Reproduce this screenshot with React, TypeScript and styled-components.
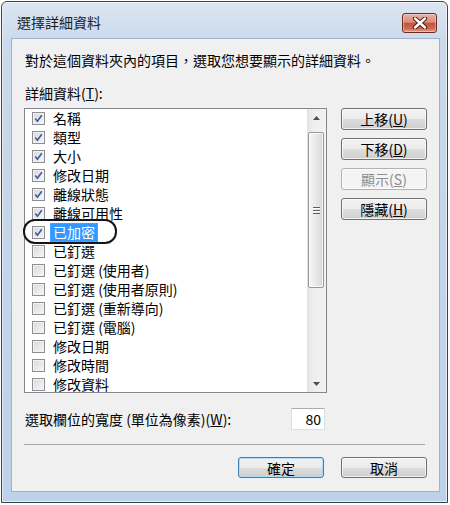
import styled, { createGlobalStyle } from 'styled-components';

const GlobalStyle = createGlobalStyle`
  html, body {
    margin: 0;
    padding: 0;
    background: #ffffff;
  }
  body {
    font-family: "Noto Sans CJK TC", "Noto Sans", "Liberation Sans", sans-serif;
  }
`;

const Window = styled.div`
  margin: 1px 0 0 1px;
  width: 447px;
  height: 502px;
  box-sizing: border-box;
  border: 1px solid #3c4149;
  border-radius: 6px 6px 0 0;
  background: linear-gradient(180deg, #dce6f2 0px, #cad9eb 40px, #bcd1ea 100%);
  box-shadow: inset 0 0 0 1px rgba(255, 255, 255, 0.6);
  display: flex;
  flex-direction: column;
`;

const TitleBar = styled.div`
  height: 36px;
  display: flex;
  align-items: flex-start;
  padding: 0 10px 0 15px;
`;

const Title = styled.span`
  flex: 1;
  margin-top: 11px;
  font-size: 14px;
  line-height: 18px;
  color: #1b1b1b;
`;

const CloseButton = styled.div`
  margin-top: 11px;
  width: 35px;
  height: 20px;
  box-sizing: border-box;
  border: 1px solid #6a2b22;
  border-radius: 3px;
  background: linear-gradient(
    180deg,
    #eab0a3 0%,
    #da8e7d 45%,
    #c4533d 52%,
    #cc6a52 80%,
    #e3a088 100%
  );
  box-shadow: inset 0 0 0 1px rgba(255, 255, 255, 0.35);
  display: flex;
  align-items: center;
  justify-content: center;
`;

const Client = styled.div`
  flex: 1;
  margin: 0 7px 10px 9px;
  border: 1px solid #9fb2c8;
  background: #f0f0f0;
  padding: 12px 12px 0 12px;
  display: flex;
  flex-direction: column;
  color: #000;
  font-size: 14px;
  line-height: 18px;
`;

const Intro = styled.div`
  padding-left: 1px;
`;

const SectionLabel = styled.div`
  margin-top: 15px;
  padding-left: 1px;
`;

const MainRow = styled.div`
  margin-top: 6px;
  display: flex;
  align-items: flex-start;
`;

const ListBox = styled.div`
  width: 303px;
  height: 285px;
  box-sizing: border-box;
  border: 1px solid #828790;
  background: #ffffff;
  display: flex;
`;

const Items = styled.div`
  flex: 1;
  display: flex;
  flex-direction: column;
`;

const Row = styled.div`
  position: relative;
  height: 19px;
  display: flex;
  align-items: center;
  padding-left: 7px;
`;

const CheckBox = styled.span`
  width: 13px;
  height: 13px;
  box-sizing: border-box;
  border: 1px solid #8f8f8f;
  background: linear-gradient(135deg, #d6d8dc, #f7f7f7);
  box-shadow: inset 0 0 0 1px #f2f2f2;
  display: flex;
  align-items: center;
  justify-content: center;
  flex-shrink: 0;
`;

const ItemLabel = styled.span<{ $selected?: boolean }>`
  margin-left: 5px;
  padding: 0 2px;
  height: 19px;
  box-sizing: border-box;
  line-height: 17px;
  border: 1px dotted ${(p) => (p.$selected ? '#e6883c' : 'transparent')};
  background: ${(p) => (p.$selected ? '#3399ff' : 'transparent')};
  color: ${(p) => (p.$selected ? '#ffffff' : '#000000')};
  white-space: nowrap;
`;

const Annotation = styled.div`
  position: absolute;
  left: -2px;
  top: -4px;
  width: 94px;
  height: 25px;
  box-sizing: border-box;
  border: 2px solid #151515;
  border-radius: 12px;
  pointer-events: none;
`;

const ScrollBar = styled.div`
  width: 19px;
  background: linear-gradient(90deg, #e2e2e2 0%, #efefef 35%, #f2f2f2 100%);
  display: flex;
  flex-direction: column;
`;

const ArrowButton = styled.div`
  height: 17px;
  display: flex;
  align-items: center;
  justify-content: center;
`;

const Track = styled.div`
  flex: 1;
  padding-top: 6px;
`;

const Thumb = styled.div`
  height: 156px;
  margin: 0 2px 0 1px;
  box-sizing: border-box;
  border: 1px solid #979797;
  border-radius: 2px;
  background: linear-gradient(90deg, #f6f6f6 0%, #e9e9e9 50%, #d6d6d6 100%);
  box-shadow: inset 0 0 0 1px rgba(255, 255, 255, 0.8);
  display: flex;
  align-items: center;
  justify-content: center;
`;

const Gripper = styled.div`
  width: 7px;
  height: 7px;
  background: repeating-linear-gradient(
    180deg,
    #5e5e5e 0px,
    #5e5e5e 1px,
    #ffffff 1px,
    #ffffff 2px,
    transparent 2px,
    transparent 3px
  );
`;

const ButtonColumn = styled.div`
  margin-left: 14px;
  display: flex;
  flex-direction: column;
  gap: 8px;
`;

const Button = styled.div<{ $disabled?: boolean; $default?: boolean; $short?: boolean }>`
  width: 86px;
  height: ${(p) => (p.$short ? '21px' : '22px')};
  box-sizing: border-box;
  border: 1px solid
    ${(p) => (p.$disabled ? '#adb2b5' : p.$default ? '#3c7fb1' : '#707070')};
  border-radius: 3px;
  background: ${(p) =>
    p.$disabled
      ? '#f4f4f4'
      : 'linear-gradient(180deg, #f2f2f2 0%, #ebebeb 50%, #dddddd 51%, #cfcfcf 100%)'};
  box-shadow: inset 0 0 0 1px
    ${(p) => (p.$default ? 'rgba(170, 220, 250, 0.9)' : 'rgba(255, 255, 255, 0.7)')};
  color: ${(p) => (p.$disabled ? '#8d8d8d' : '#000000')};
  display: flex;
  align-items: center;
  justify-content: center;
  font-size: 14px;
  line-height: 18px;
`;

const WidthRow = styled.div`
  margin-top: 15px;
  width: 301px;
  height: 22px;
  display: flex;
  align-items: center;
`;

const WidthLabel = styled.span`
  padding-left: 1px;
`;

const WidthInput = styled.input`
  margin-left: auto;
  width: 34px;
  height: 22px;
  box-sizing: border-box;
  border: 1px solid #dbdfe6;
  border-top-color: #abadb3;
  background: #ffffff;
  padding: 0 3px 0 0;
  font-family: inherit;
  font-size: 14px;
  text-align: right;
  color: #000;
  outline: none;
`;

const Separator = styled.div`
  margin-top: 14px;
  width: 401px;
  border-top: 1px solid #a7a7a7;
`;

const ButtonRow = styled.div`
  margin-top: 12px;
  display: flex;
  justify-content: flex-end;
  gap: 17px;
`;

const CheckMark = () => (
  <svg width="9" height="9" viewBox="0 0 9 9">
    <path d="M1.3 4.6 L3.4 7.2 L7.8 1.2" fill="none" stroke="#3a58a3" strokeWidth="1.6" />
  </svg>
);

const CloseGlyph = () => (
  <svg width="16" height="12" viewBox="0 0 16 12">
    <path d="M3 1.5 L13 10.5 M13 1.5 L3 10.5" stroke="#4b1a14" strokeWidth="4.4" strokeLinecap="round" />
    <path d="M3 1.5 L13 10.5 M13 1.5 L3 10.5" stroke="#ffffff" strokeWidth="2.4" strokeLinecap="round" />
  </svg>
);

const ArrowUp = () => (
  <svg width="7" height="4" viewBox="0 0 7 4">
    <path d="M0 4 L3.5 0 L7 4 Z" fill="#4f4f4f" />
  </svg>
);

const ArrowDown = () => (
  <svg width="7" height="4" viewBox="0 0 7 4">
    <path d="M0 0 L7 0 L3.5 4 Z" fill="#4f4f4f" />
  </svg>
);

const items = [
  { name: '名稱', checked: true },
  { name: '類型', checked: true },
  { name: '大小', checked: true },
  { name: '修改日期', checked: true },
  { name: '離線狀態', checked: true },
  { name: '離線可用性', checked: true },
  { name: '已加密', checked: true, selected: true },
  { name: '已釘選', checked: false },
  { name: '已釘選 (使用者)', checked: false },
  { name: '已釘選 (使用者原則)', checked: false },
  { name: '已釘選 (重新導向)', checked: false },
  { name: '已釘選 (電腦)', checked: false },
  { name: '修改日期', checked: false },
  { name: '修改時間', checked: false },
  { name: '修改資料', checked: false },
];

export default function App() {
  return (
    <>
      <GlobalStyle />
      <Window>
        <TitleBar>
          <Title>選擇詳細資料</Title>
          <CloseButton>
            <CloseGlyph />
          </CloseButton>
        </TitleBar>
        <Client>
          <Intro>對於這個資料夾內的項目，選取您想要顯示的詳細資料。</Intro>
          <SectionLabel>
            詳細資料(<u>T</u>):
          </SectionLabel>
          <MainRow>
            <ListBox>
              <Items>
                {items.map((item, i) => (
                  <Row key={i}>
                    <CheckBox>{item.checked && <CheckMark />}</CheckBox>
                    <ItemLabel $selected={item.selected}>{item.name}</ItemLabel>
                    {item.selected && <Annotation />}
                  </Row>
                ))}
              </Items>
              <ScrollBar>
                <ArrowButton>
                  <ArrowUp />
                </ArrowButton>
                <Track>
                  <Thumb>
                    <Gripper />
                  </Thumb>
                </Track>
                <ArrowButton>
                  <ArrowDown />
                </ArrowButton>
              </ScrollBar>
            </ListBox>
            <ButtonColumn>
              <Button>
                上移(<u>U</u>)
              </Button>
              <Button>
                下移(<u>D</u>)
              </Button>
              <Button $disabled>
                顯示(<u>S</u>)
              </Button>
              <Button>
                隱藏(<u>H</u>)
              </Button>
            </ButtonColumn>
          </MainRow>
          <WidthRow>
            <WidthLabel>
              選取欄位的寬度 (單位為像素)(<u>W</u>):
            </WidthLabel>
            <WidthInput readOnly value="80" />
          </WidthRow>
          <Separator />
          <ButtonRow>
            <Button $default $short>
              確定
            </Button>
            <Button $short>取消</Button>
          </ButtonRow>
        </Client>
      </Window>
    </>
  );
}
